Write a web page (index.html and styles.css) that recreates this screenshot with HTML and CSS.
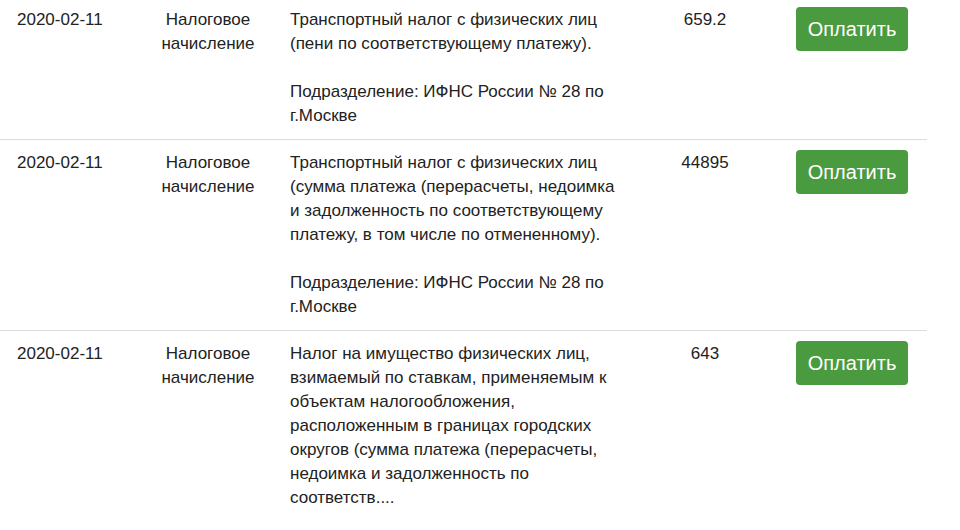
FILE: index.html
```html
<!DOCTYPE html>
<html lang="ru">
<head>
<meta charset="utf-8">
<link rel="stylesheet" href="styles.css">
</head>
<body>
<div class="table">
  <div class="row">
    <div class="cell date">2020-02-11</div>
    <div class="cell type">Налоговое начисление</div>
    <div class="cell desc">
      <p>Транспортный налог с физических лиц (пени по соответствующему платежу).</p>
      <p>Подразделение: ИФНС России № 28 по г.Москве</p>
    </div>
    <div class="cell amount">659.2</div>
    <div class="cell action"><button class="pay">Оплатить</button></div>
  </div>
  <div class="row">
    <div class="cell date">2020-02-11</div>
    <div class="cell type">Налоговое начисление</div>
    <div class="cell desc">
      <p>Транспортный налог с физических лиц (сумма платежа (перерасчеты, недоимка и задолженность по соответствующему платежу, в том числе по отмененному).</p>
      <p>Подразделение: ИФНС России № 28 по г.Москве</p>
    </div>
    <div class="cell amount">44895</div>
    <div class="cell action"><button class="pay">Оплатить</button></div>
  </div>
  <div class="row">
    <div class="cell date">2020-02-11</div>
    <div class="cell type">Налоговое начисление</div>
    <div class="cell desc">
      <p>Налог на имущество физических лиц, взимаемый по ставкам, применяемым к объектам налогообложения,<br>расположенным в границах городских округов (сумма платежа (перерасчеты, недоимка и задолженность по соответств....</p>
      <p>Подразделение: ИФНС России № 28 по г.Москве</p>
    </div>
    <div class="cell amount">643</div>
    <div class="cell action"><button class="pay">Оплатить</button></div>
  </div>
</div>
</body>
</html>
```
FILE: styles.css
```css
html, body {
  margin: 0;
  padding: 0;
  background: #fff;
}
body {
  font-family: "Liberation Sans", Arial, sans-serif;
  font-size: 17px;
  line-height: 24px;
  color: #222;
}
.table {
  width: 927px;
  margin-top: -3px;
}
.row {
  display: grid;
  grid-template-columns: 133px 150px 349px 146px 149px;
  border-bottom: 1px solid #dcdcdc;
  padding: 11px 0 11px;
}
.cell p {
  margin: 0 0 24px;
}
.cell p:last-child {
  margin-bottom: 0;
}
.date {
  padding-left: 17px;
}
.type {
  text-align: center;
  padding: 0 20px;
}
.desc {
  padding: 0 7px;
}
.amount {
  text-align: center;
}
.action {
  padding-left: 18px;
}
.pay {
  width: 112px;
  height: 44px;
  margin-top: -1px;
  background: #4a9a3f;
  color: #fff;
  border: none;
  border-radius: 4px;
  font-family: "Liberation Sans", Arial, sans-serif;
  font-size: 20px;
  padding: 0;
  cursor: pointer;
}
```
